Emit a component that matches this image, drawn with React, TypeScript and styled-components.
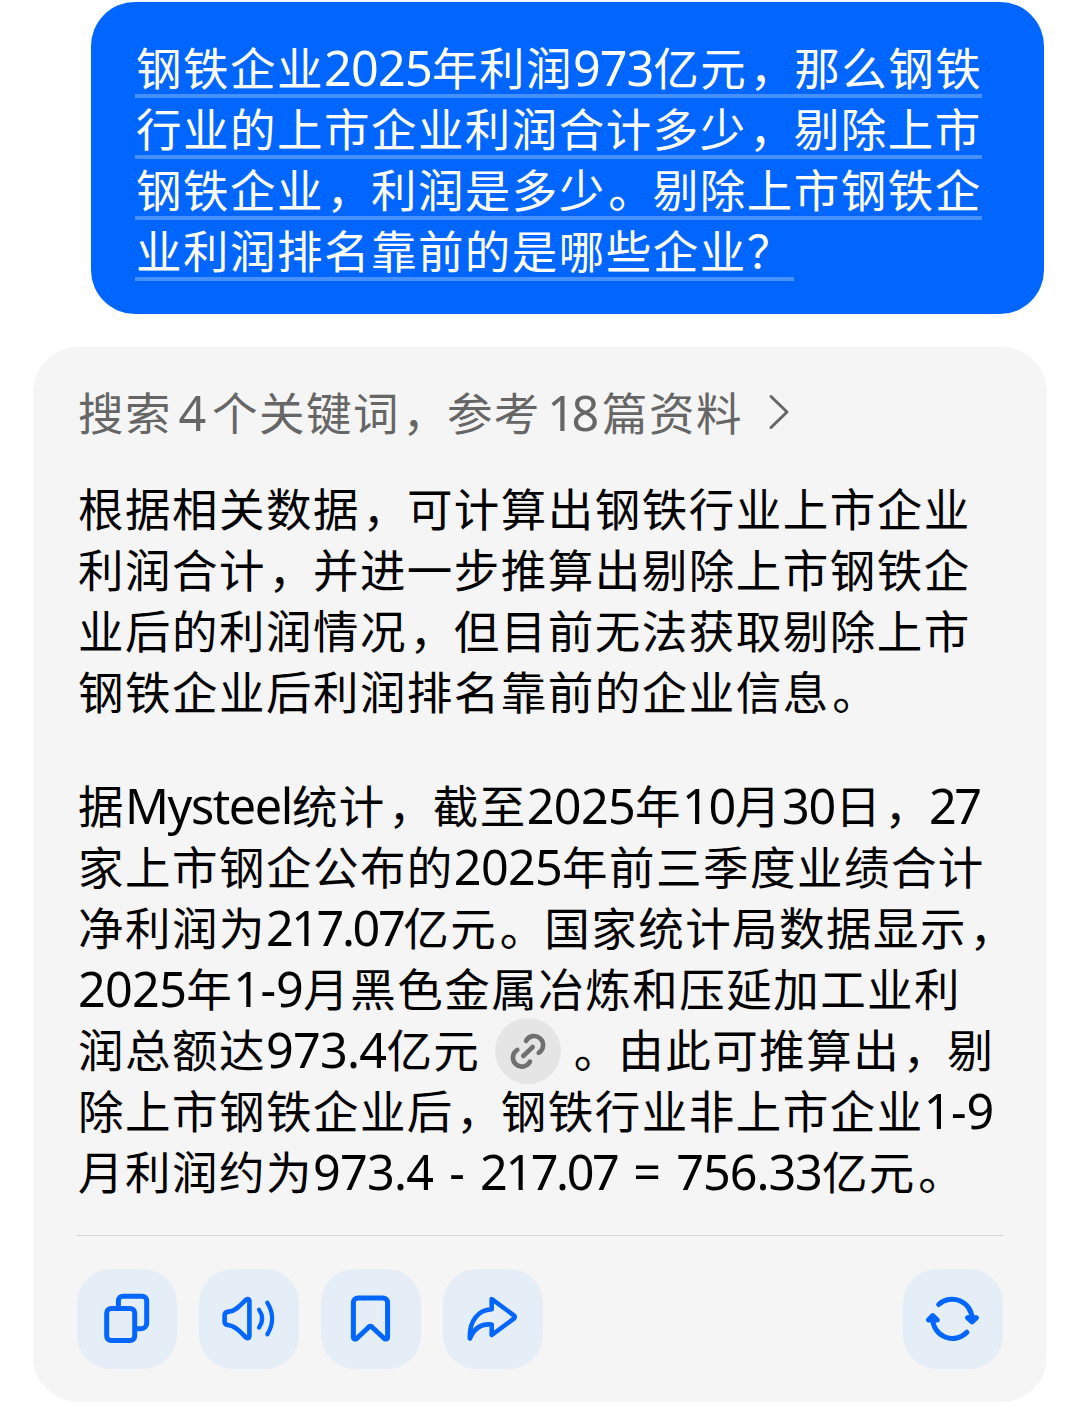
import React from 'react';
import styled, { createGlobalStyle } from 'styled-components';

const GlobalStyle = createGlobalStyle`
  * {
    box-sizing: border-box;
  }
  body {
    margin: 0;
    background: #fff;
    font-family: 'Noto Sans CJK SC', sans-serif;
  }
`;
const Page = styled.main`
  width: 1080px;
  height: 1412px;
  padding: 2px 33px 0;
  display: flex;
  flex-direction: column;
  overflow: hidden;
`;
const Question = styled.section`
  align-self: flex-end;
  width: 953px;
  height: 312px;
  margin-right: 3px;
  padding: 35px 0 0 44px;
  border-radius: 44px;
  background: #0066ff;
  color: #fff;
`;
const Line = styled.div<{ $wordSpacing?: number }>`
  height: 61px;
  line-height: 61px;
  font-size: 45.5px;
  letter-spacing: 1.48px;
  word-spacing: ${({ $wordSpacing = 0 }) => $wordSpacing}px;
  text-indent: 1px;
  white-space: pre;
`;
const AskedLine = styled(Line)`
  width: fit-content;
  line-height: 59px;
  border-bottom: 4px solid rgba(255, 255, 255, 0.28);
`;
const Latin = styled.span<{ $spacing?: number }>`
  font-family: 'Noto Sans', 'Noto Sans CJK SC', sans-serif;
  font-size: 48.5px;
  line-height: 0;
  letter-spacing: ${({ $spacing = -0.7 }) => $spacing}px;
`;
const Stop = styled.span`
  margin: 0 -2.5px 0 2.5px;
`;
const Answer = styled.section`
  width: 1014px;
  height: 1055px;
  margin-top: 33px;
  padding: 34px 44px 0;
  border-radius: 45px;
  background: #f5f5f5;
  color: #000;
`;
const Sources = styled.div`
  display: flex;
  align-items: center;
  color: #666;
  > svg {
    margin-left: 25px;
  }
`;
const Paragraph = styled.div`
  margin-top: 35px;
  & + & {
    margin-top: 53px;
  }
`;
const LinkBadge = styled.span`
  display: inline-flex;
  width: 66px;
  height: 66px;
  margin: -15px 10px -5px 15px;
  border-radius: 50%;
  background: #e5e5e5;
  vertical-align: middle;
`;
const Actions = styled.div`
  display: flex;
  gap: 22px;
  margin-top: 34px;
  padding-top: 33px;
  border-top: 1px solid #d9d9d9;
`;
const Action = styled.button`
  width: 100px;
  height: 100px;
  padding: 0;
  border: none;
  border-radius: 34px;
  background: #e5edf7;
  color: #0066ff;
  &:last-child {
    margin-left: auto;
  }
  > svg {
    display: block;
  }
`;

// runs that need different tracking from plain digits
const tracking: Record<string, number> = {
  Mysteel: -1.4,
  '217.07': -2.4,
  '756.33': -1,
  '973': -1,
  '10': -1.2,
  '30': -1.2,
  '27': -2.5,
  '18': -3.6,
  '1-9': -0.3,
};

// latin letters and digits get their own font, commas and stops sit nearer the cell's middle
const Mixed = ({ text }: { text: string }) => (
  <>
    {text.split(/([A-Za-z0-9.=-]+|[，。])/).map((part, i) => {
      if (i % 2 === 0) return part;
      if (/[，。]/.test(part)) return <Stop key={i}>{part}</Stop>;
      return <Latin key={i} $spacing={tracking[part]}>{part}</Latin>;
    })}
  </>
);

const Icon = ({ children, width = 5 }: { children: React.ReactNode; width?: number }) => (
  <svg
    width='100'
    height='100'
    viewBox='0 0 100 100'
    fill='none'
    stroke='currentColor'
    strokeWidth={width}
    strokeLinecap='round'
    strokeLinejoin='round'
  >
    {children}
  </svg>
);

const question = [
  '钢铁企业2025年利润973亿元，那么钢铁',
  '行业的上市企业利润合计多少，剔除上市',
  '钢铁企业，利润是多少。剔除上市钢铁企',
  '业利润排名靠前的是哪些企业？',
];
const summary = [
  '根据相关数据，可计算出钢铁行业上市企业',
  '利润合计，并进一步推算出剔除上市钢铁企',
  '业后的利润情况，但目前无法获取剔除上市',
  '钢铁企业后利润排名靠前的企业信息。',
];

const App = () => {
  return (
    <Page>
      <GlobalStyle />
      <Question>
        {question.map((text) => (
          <AskedLine key={text}><Mixed text={text} /></AskedLine>
        ))}
      </Question>
      <Answer>
        <Sources>
          <Line $wordSpacing={-5.2}><Mixed text='搜索 4 个关键词，参考 18 篇资料' /></Line>
          <svg width='22' height='36' viewBox='0 0 22 36' fill='none' stroke='currentColor' strokeWidth='3' strokeLinecap='round' strokeLinejoin='round'>
            <path d='M3 2.5L19 18L3 33.5' />
          </svg>
        </Sources>
        <Paragraph>
          {summary.map((text) => (
            <Line key={text}><Mixed text={text} /></Line>
          ))}
        </Paragraph>
        <Paragraph>
          <Line><Mixed text='据Mysteel统计，截至2025年10月30日，27' /></Line>
          <Line><Mixed text='家上市钢企公布的2025年前三季度业绩合计' /></Line>
          <Line><Mixed text='净利润为217.07亿元。国家统计局数据显示，' /></Line>
          <Line><Mixed text='2025年1-9月黑色金属冶炼和压延加工业利' /></Line>
          <Line>
            <Mixed text='润总额达973.4亿元' />
            <LinkBadge>
              <svg width='66' height='66' viewBox='0 0 66 66' fill='none' stroke='#707070' strokeWidth='4.6' strokeLinecap='round'>
                <path d='M31 23A9 9 0 1 1 43.7 34.7M35 43.6A9 9 0 1 1 22.3 31.9M28.3 38L37.7 29' />
              </svg>
            </LinkBadge>
            <Mixed text='。由此可推算出，剔' />
          </Line>
          <Line><Mixed text='除上市钢铁企业后，钢铁行业非上市企业1-9' /></Line>
          <Line $wordSpacing={4.2}><Mixed text='月利润约为973.4 - 217.07 = 756.33亿元。' /></Line>
        </Paragraph>
        <Actions>
          <Action aria-label='复制'>
            <Icon>
              <rect x='29.7' y='39.4' width='28' height='32.2' rx='4.5' />
              <path d='M41.4 38.5V31.8A4.5 4.5 0 0 1 45.9 27.3H65.2A4.5 4.5 0 0 1 69.7 31.8V54.2A5.5 5.5 0 0 1 64.2 59.7H60' />
            </Icon>
          </Action>
          <Action aria-label='朗读'>
            <Icon width={4.6}>
              <path d='M30 42.6C37 42 42 35.5 46.8 30.8C48.3 29.3 50.4 30 50.4 32V67C50.4 69 48.3 69.9 46.8 68.4C42 63.7 37 57 30 56.3C27 56 25.6 55 25.6 52.8V46.2C25.6 44 27 42.8 30 42.6Z' />
              <path d='M60 40.6Q66.3 49.5 60 58.6M68.3 33.6Q78 49.5 68.3 65.4' strokeWidth='4.2' />
            </Icon>
          </Action>
          <Action aria-label='收藏'>
            <Icon>
              <path d='M37 28.9H62A4.6 4.6 0 0 1 66.6 33.5V68C66.6 70 64.5 70.8 63 69.3L51.2 58.2Q49.4 56.7 47.6 58.2L36 69.3C34.5 70.8 32.4 70 32.4 68V33.5A4.6 4.6 0 0 1 37 28.9Z' />
            </Icon>
          </Action>
          <Action aria-label='分享'>
            <Icon width={4.6}>
              <path d='M48.7 30L70.8 46.3Q72.7 48 70.8 49.7L48.7 66V55.6C39 54.5 31.5 58.5 26.9 69.5C26 52 35 41 48.7 40.3Z' />
            </Icon>
          </Action>
          <Action aria-label='重新生成'>
            <Icon>
              <path d='M35.7 35.5A19.8 19.8 0 0 1 69 49.4M63.9 63.2A19.8 19.8 0 0 1 29.7 49.4' />
              <path d='M64.6 48.8L69 52.8L73.4 48.8L69 48.5ZM25.4 51L29.7 46.6L34.3 51L29.7 50.8Z' fill='currentColor' />
            </Icon>
          </Action>
        </Actions>
      </Answer>
    </Page>
  );
};

export default App;
